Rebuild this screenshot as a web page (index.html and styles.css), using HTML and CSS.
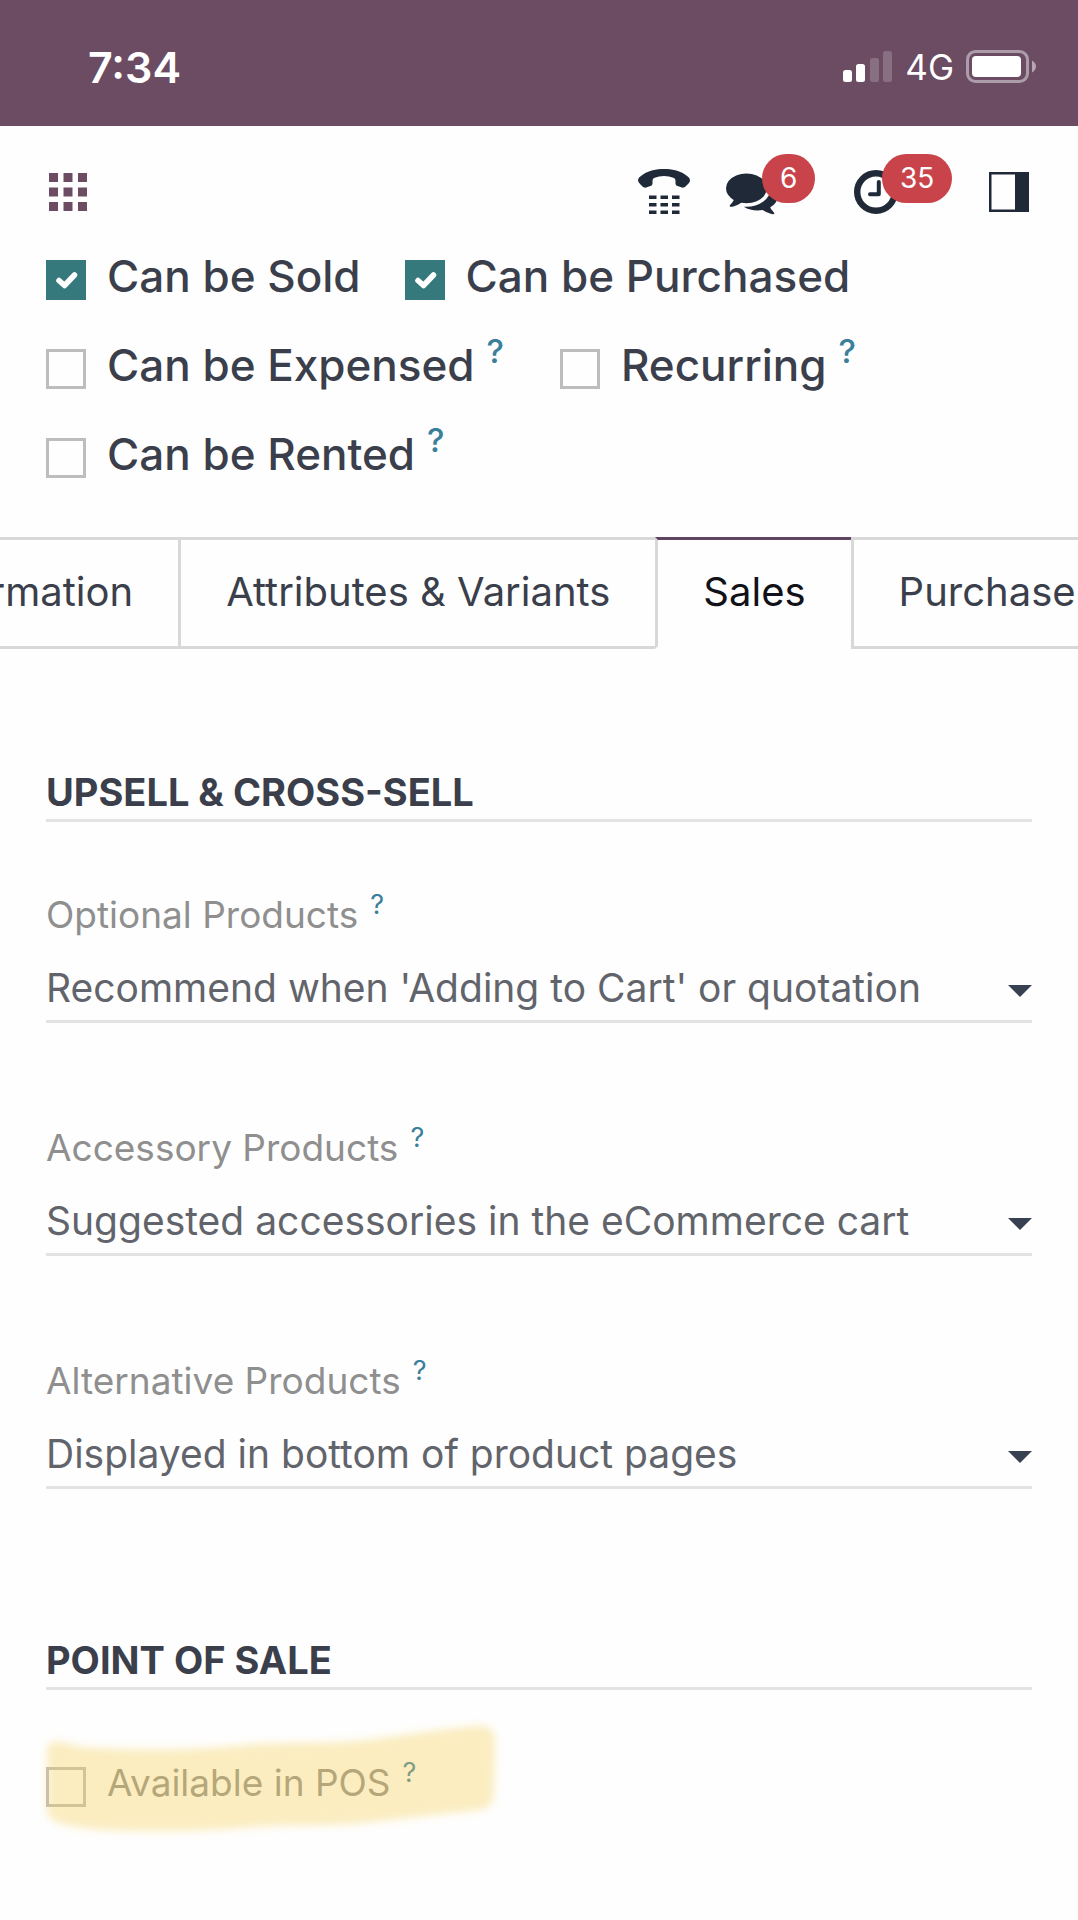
FILE: index.html
```html
<!DOCTYPE html>
<html lang="en">
<head>
  <meta charset="UTF-8" />
  <meta name="viewport" content="width=device-width, initial-scale=1.0"/>
  <title>Product</title>
  <link rel="stylesheet" href="styles.css">
</head>
<body>
  <div class="status-bar">
    <span class="time">7:34</span>
    <div class="status-icons">
      <svg width="50" height="32" viewBox="0 0 50 32" fill="#fff">
        <rect x="0" y="19" width="9" height="12" rx="2.5"/>
        <rect x="13" y="13" width="9" height="18" rx="2.5"/>
        <rect x="27" y="7" width="9" height="24" rx="2.5" opacity="0.2"/>
        <rect x="40" y="0" width="9" height="31" rx="2.5" opacity="0.2"/>
      </svg>
      <span class="network">4G</span>
      <svg width="70" height="34" viewBox="0 0 70 34">
        <rect x="1.5" y="1.5" width="60" height="30" rx="8" fill="none" stroke="#fff" stroke-opacity="0.45" stroke-width="3"/>
        <rect x="6" y="6" width="49" height="21" rx="4" fill="#fff"/>
        <path d="M66 10.500v12q4-2.500 4-6t-4-6z" fill="#fff" fill-opacity="0.5"/>
      </svg>
    </div>
  </div>

  <header class="navbar">
    <button class="nav-btn apps" aria-label="Apps">
      <svg width="38" height="38" viewBox="0 0 38 38" fill="#6b4c63">
        <path d="M0 0h9v9H0zM14.500 0h9v9h-9zM29 0h9v9h-9zM0 14.500h9v9H0zM14.500 14.500h9v9h-9zM29 14.500h9v9h-9zM0 29h9v9H0zM14.500 29h9v9h-9zM29 29h9v9h-9z"/>
      </svg>
    </button>
    <div class="nav-right">
      <button class="nav-btn" aria-label="Phone">
        <svg width="52" height="52" viewBox="0 0 52 52" fill="#1f2937">
          <path d="M0 14.500C0 12 2 10.500 5 8.500C11 4.500 18 3 26 3s15 1.500 21 5.500c3 2 5 3.500 5 6c0 1.500-1 2.500-2.500 4l-2 2q-1.500 1.500-3.500 1l-4.500-1.500q-2-.5-2-2.500v-2.500q0-2.500-1.500-3q-10-4-20 0q-1.500.5-1.500 3v2.500q0 2-2 2.500l-4.500 1.500q-2 .5-3.500-1l-2-2Q0 16 0 14.500z"/>
          <path d="M11 29.500h7.500V33H11zM22.500 29.500H30V33h-7.500zM34 29.500h7.500V33H34zM11 37h7.500v3.500H11zM22.500 37H30v3.500h-7.500zM34 37h7.500v3.500H34zM11 44.500h7.500V48H11zM22.500 44.500H30V48h-7.500zM34 44.500h7.500V48H34z"/>
        </svg>
      </button>
      <button class="nav-btn messages" aria-label="Messages">
        <svg width="52" height="52" viewBox="0 0 1792 1792" fill="#1f2937">
          <path d="M1408 768q0 139-94 257t-256.500 186.500-353.500 68.500q-86 0-176-16-124 88-278 128-36 9-86 16h-3q-11 0-20.500-8t-11.500-21q-1-3-1-6.500t.5-6.500 2-6l2.500-5 3.500-5.500 4-5 4.500-5 4-4.500q5-6 23-25t26-29.500 22.500-29 25-38.500 20.500-44q-124-72-195-177t-71-224q0-139 94-257t256.500-186.500 353.500-68.500 353.500 68.500 256.500 186.500 94 257zm384 256q0 120-71 224.500t-195 176.500q10 24 20.500 44t25 38.500 22.500 29 26 29.500 23 25q1 1 4 4.500t4.500 5 4 5 3.500 5.500l2.500 5 2 6 .5 6.500-1 6.500q-3 14-13 22t-22 7q-50-7-86-16-154-40-278-128-90 16-176 16-271 0-472-132 58 4 88 4 161 0 309-45t264-129q125-92 192-212t67-254q0-77-23-152 129 71 204 178t75 230z"/>
        </svg>
        <span class="badge">6</span>
      </button>
      <button class="nav-btn activities" aria-label="Activities">
        <svg width="44" height="44" viewBox="0 0 44 44" fill="none" stroke="#1f2937">
          <circle cx="22" cy="22" r="18.800" stroke-width="6.400"/>
          <path d="M24.800 12v12.300H16" stroke-width="4" stroke-linecap="round" stroke-linejoin="round"/>
        </svg>
        <span class="badge">35</span>
      </button>
      <button class="nav-btn" aria-label="Toggle panel">
        <svg width="40" height="40" viewBox="0 0 40 40" fill="#1f2937">
          <path fill-rule="evenodd" d="M0 0h40v40H0zM2.500 2.500v35H26v-35z"/>
        </svg>
      </button>
    </div>
  </header>

  <main>
    <div class="options">
      <div class="option">
        <input type="checkbox" id="sold" checked />
        <label for="sold">Can be Sold</label>
      </div>
      <div class="option">
        <input type="checkbox" id="purchased" checked />
        <label for="purchased">Can be Purchased</label>
      </div>
      <div class="option">
        <input type="checkbox" id="expensed" />
        <label for="expensed">Can be Expensed<sup>?</sup></label>
      </div>
      <div class="option">
        <input type="checkbox" id="recurring" />
        <label for="recurring">Recurring<sup>?</sup></label>
      </div>
      <div class="option">
        <input type="checkbox" id="rented" />
        <label for="rented">Can be Rented<sup>?</sup></label>
      </div>
    </div>

    <nav class="tabs">
      <a class="tab" href="#">General Information</a>
      <a class="tab" href="#">Attributes &amp; Variants</a>
      <a class="tab active" href="#">Sales</a>
      <a class="tab" href="#">Purchase</a>
    </nav>

    <div class="tab-content">
      <section class="group">
        <h2>UPSELL &amp; CROSS-SELL</h2>
        <div class="field">
          <label for="optional">Optional Products<sup>?</sup></label>
          <div class="dropdown">
            <input type="text" id="optional" placeholder="Recommend when 'Adding to Cart' or quotation" />
            <button class="caret" aria-label="Open list"></button>
          </div>
        </div>
        <div class="field">
          <label for="accessory">Accessory Products<sup>?</sup></label>
          <div class="dropdown">
            <input type="text" id="accessory" placeholder="Suggested accessories in the eCommerce cart" />
            <button class="caret" aria-label="Open list"></button>
          </div>
        </div>
        <div class="field">
          <label for="alternative">Alternative Products<sup>?</sup></label>
          <div class="dropdown">
            <input type="text" id="alternative" placeholder="Displayed in bottom of product pages" />
            <button class="caret" aria-label="Open list"></button>
          </div>
        </div>
      </section>

      <section class="group">
        <h2>POINT OF SALE</h2>
        <div class="option pos">
          <input type="checkbox" id="pos" />
          <label for="pos">Available in POS<sup>?</sup></label>
          <!-- marker stroke over the option -->
          <svg class="marker" width="470" height="130" viewBox="0 0 470 130">
            <path d="M18 27C30 22 36 31 62 32C110 34 150 34 190 31C250 24 290 29 335 24C380 18 410 13 446 10Q462 8 463 24L462 74Q462 92 448 94C410 98 360 104 330 107C290 111 260 108 220 111C170 116 120 116 70 114C40 111 16 108 15 96L15 32z"/>
          </svg>
        </div>
      </section>
    </div>
  </main>
</body>
</html>
```
FILE: styles.css
```css
* {
  box-sizing: border-box;
  margin: 0;
  padding: 0;
}

body {
  background: #fefefe;
  color: #3a3f4b;
  font-family: Inter, 'Liberation Sans', sans-serif;
  overflow-x: hidden;
}

button {
  background: none;
  border: none;
  cursor: pointer;
}

svg {
  display: block;
}

.status-bar {
  display: flex;
  justify-content: space-between;
  align-items: center;
  height: 126px;
  padding: 7px 42px 0 88px;
  background: #6b4c63;
  color: #fff;
}

.time {
  font-size: 43px;
  font-weight: 600;
}

.status-icons {
  display: flex;
  align-items: center;
  gap: 12px;
}

.network {
  font-size: 35px;
  font-weight: 400;
}

.navbar {
  display: flex;
  justify-content: space-between;
  align-items: center;
  padding: 40px 49px 25px;
}

.nav-right {
  display: flex;
  align-items: center;
}

.nav-btn {
  position: relative;
}

.messages {
  margin-left: 36px;
}

.activities {
  margin: 0 91px 0 76px;
}

.badge {
  position: absolute;
  top: -12px;
  left: 36px;
  padding: 0 18px;
  border-radius: 25px;
  background: #c9444a;
  color: #fff;
  font: 28px/49px Inter, sans-serif;
}

.activities .badge {
  top: -16px;
  left: 28px;
}

.options {
  display: flex;
  flex-wrap: wrap;
  gap: 23px 44px;
  padding: 0 46px 50px;
}

.option {
  display: flex;
  align-items: center;
  gap: 21px;
  font-size: 44px;
  font-weight: 500;
  line-height: 66px;
}

.option input {
  appearance: none;
  width: 40px;
  height: 40px;
  margin-top: 8px;
  border: 3px solid #bdbdbd;
}

.option input:checked {
  border: none;
  background: #35797d url("data:image/svg+xml,%3Csvg xmlns='http://www.w3.org/2000/svg' viewBox='0 0 40 40'%3E%3Cpath d='M13 20.500l5.500 5 10-10.500' fill='none' stroke='%23fff' stroke-width='5.500' stroke-linecap='round' stroke-linejoin='round'/%3E%3C/svg%3E") center / 40px 40px;
}

sup {
  margin: 0 12px;
  color: #3a7f9b;
  font-size: 33px;
  line-height: 0;
  vertical-align: 18px;
}

.tabs {
  display: flex;
  margin-left: -289px;
}

.tab {
  flex: none;
  padding: 22px 45px 24px;
  border: solid #d8d8d8;
  border-width: 3px 0 3px 3px;
  color: #3a3f4b;
  font-size: 40px;
  line-height: 60px;
  text-decoration: none;
}

.tab:last-child {
  flex: 1 0 auto;
}

.tab.active {
  border-top-color: #5f4360;
  border-bottom-color: transparent;
  color: #111118;
}

.tab-content {
  padding: 116px 46px 60px;
}

.group + .group {
  margin-top: 144px;
}

.group h2 {
  margin-bottom: 66px;
  border-bottom: 3px solid #e3e3e3;
  font-size: 38px;
  font-weight: 700;
  line-height: 54px;
}

.field + .field {
  margin-top: 98px;
}

.field label {
  display: block;
  margin-bottom: 12px;
  color: #8f8f8f;
  font-size: 37px;
  line-height: 54px;
}

.field sup,
.pos sup {
  font-size: 27px;
  vertical-align: 14px;
}

.dropdown {
  display: flex;
  align-items: center;
  border-bottom: 3px solid #e3e3e3;
}

.dropdown input {
  flex: 1;
  min-width: 0;
  height: 66px;
  border: none;
  outline: none;
  background: none;
  font-family: inherit;
  font-size: 39px;
}

.dropdown input::placeholder {
  color: #62646b;
  opacity: 1;
}

.caret {
  margin-top: 8px;
  border: solid transparent;
  border-width: 12px 12px 0;
  border-top-color: #374151;
}

.pos {
  position: relative;
  color: #8f8f8f;
  font-size: 37px;
  font-weight: 400;
  line-height: 54px;
}

.marker {
  position: absolute;
  top: -40px;
  left: -14px;
  fill: rgba(247, 210, 86, 0.37);
  filter: blur(4px);
  pointer-events: none;
}
```
